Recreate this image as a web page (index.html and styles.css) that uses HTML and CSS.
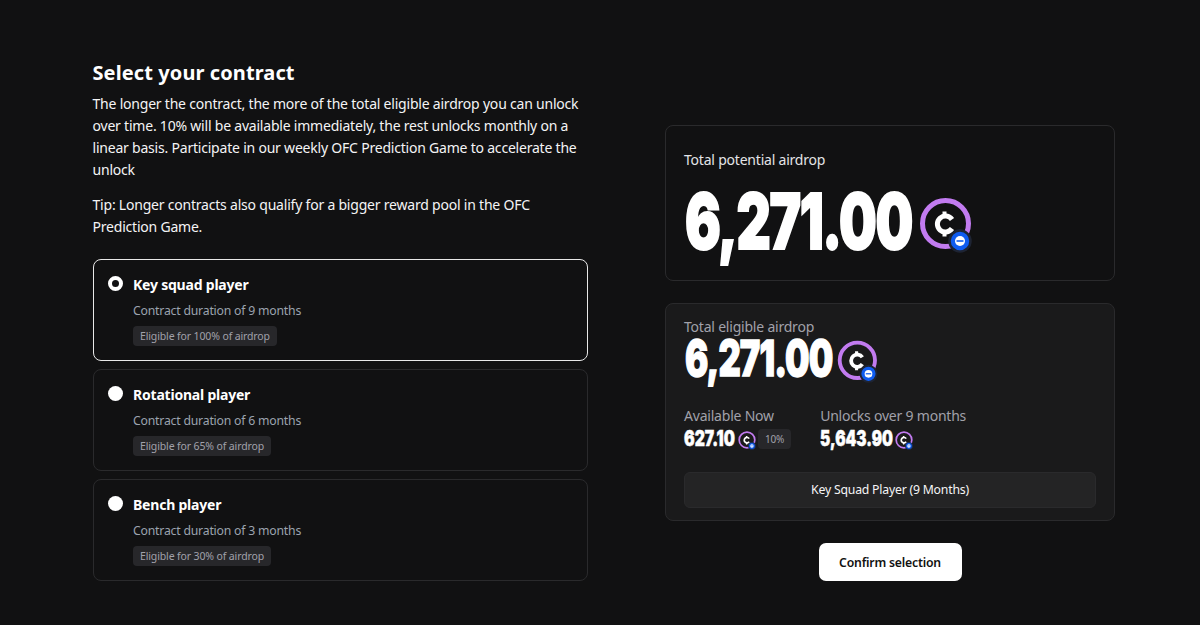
FILE: index.html
```html
<!DOCTYPE html>
<html lang="en">
<head>
    <meta charset="UTF-8">
    <meta name="viewport" content="width=device-width, initial-scale=1.0">
    <title>Select your contract</title>
    <link rel="stylesheet" href="styles.css">
</head>
<body>
    <svg class="defs" width="0" height="0">
        <symbol id="coin" viewBox="0 0 56 56">
            <circle cx="26.5" cy="26.5" r="23" fill="none" stroke="#c27bf0" stroke-width="5"/>
            <path d="M33 22.5A8 8 0 1 0 33 31.5" fill="none" stroke="#fff" stroke-width="5"/>
            <path d="M25.5 14.5v5M25.5 34.5v5" stroke="#fff" stroke-width="4"/>
            <circle cx="41" cy="44" r="10.5" fill="#0f5cf0" stroke="#1e2433" stroke-width="2.5"/>
            <circle cx="41" cy="44" r="5" fill="#fff"/>
            <rect x="37.5" y="43.2" width="7" height="1.6" fill="#0f5cf0"/>
        </symbol>
    </svg>

    <main class="page">
        <!-- Contract options -->
        <section class="left">
            <h1>Select your contract</h1>
            <p class="intro">The longer the contract, the more of the total eligible airdrop you can unlock over time. 10% will be available immediately, the rest unlocks monthly on a linear basis. Participate in our weekly OFC Prediction Game to accelerate the unlock</p>
            <p class="tip">Tip: Longer contracts also qualify for a bigger reward pool in the OFC Prediction Game.</p>

            <div class="options">
                <div class="option selected">
                    <span class="radio"></span>
                    <div>
                        <h2>Key squad player</h2>
                        <p class="duration">Contract duration of 9 months</p>
                        <span class="badge">Eligible for 100% of airdrop</span>
                    </div>
                </div>
                <div class="option">
                    <span class="radio"></span>
                    <div>
                        <h2>Rotational player</h2>
                        <p class="duration">Contract duration of 6 months</p>
                        <span class="badge">Eligible for 65% of airdrop</span>
                    </div>
                </div>
                <div class="option">
                    <span class="radio"></span>
                    <div>
                        <h2>Bench player</h2>
                        <p class="duration">Contract duration of 3 months</p>
                        <span class="badge">Eligible for 30% of airdrop</span>
                    </div>
                </div>
            </div>
        </section>

        <!-- Airdrop summary -->
        <section class="right">
            <div class="card potential">
                <p class="potential-label">Total potential airdrop</p>
                <div class="amount amount-xl">
                    <span class="num num-xl">6,271.00</span>
                    <svg class="coin coin-xl"><use href="#coin"/></svg>
                </div>
            </div>

            <div class="card eligible">
                <p class="label">Total eligible airdrop</p>
                <div class="amount amount-lg">
                    <span class="num num-lg">6,271.00</span>
                    <svg class="coin coin-lg"><use href="#coin"/></svg>
                </div>
                <div class="split">
                    <div>
                        <p class="label">Available Now</p>
                        <div class="amount amount-sm">
                            <span class="num num-sm">627.10</span>
                            <svg class="coin coin-sm"><use href="#coin"/></svg>
                            <span class="pct">10%</span>
                        </div>
                    </div>
                    <div>
                        <p class="label">Unlocks over 9 months</p>
                        <div class="amount amount-sm">
                            <span class="num num-sm num-wide">5,643.90</span>
                            <svg class="coin coin-sm"><use href="#coin"/></svg>
                        </div>
                    </div>
                </div>
                <div class="chosen">Key Squad Player (9 Months)</div>
            </div>

            <div class="button-container">
                <button type="button" class="confirm">Confirm selection</button>
            </div>
        </section>
    </main>
</body>
</html>
```

FILE: styles.css
```css
* {
    box-sizing: border-box;
}

body {
    margin: 0;
    height: 625px;
    overflow: hidden;
    background-color: #111112;
    color: #fff;
    font-family: 'Noto Sans', sans-serif;
    letter-spacing: -0.21px;
}

p, h1, h2 {
    margin: 0;
}

.defs {
    display: block;
    height: 0;
}

.page {
    display: flex;
    align-items: flex-end;
    justify-content: space-between;
    padding: 60px 85px 44px 92.5px;
}

.left {
    width: 495px;
}

h1 {
    font-size: 20px;
    line-height: 26px;
    font-weight: 700;
    letter-spacing: 0.1px;
}

.intro, .tip {
    font-size: 14px;
    line-height: 22px;
    color: #f4f4f5;
}

.intro {
    margin-top: 7px;
}

.tip {
    margin-top: 13px;
}

.options {
    display: flex;
    flex-direction: column;
    gap: 8px;
    margin-top: 21px;
}

.option {
    display: flex;
    gap: 10px;
    height: 102px;
    padding: 14px 14px 0 14.5px;
    border: 1px solid #2a2a2c;
    border-radius: 8px;
}

.option.selected {
    border-color: #e8e8e8;
}

.radio {
    flex: none;
    width: 15px;
    height: 15px;
    margin-top: 2px;
    border-radius: 50%;
    background-color: #fff;
}

.selected .radio {
    border: 4px solid #fff;
    background-color: #111112;
}

h2 {
    font-size: 14px;
    line-height: 22px;
    font-weight: 700;
}

.duration {
    margin-top: 5px;
    font-size: 12.25px;
    line-height: 20px;
    color: #9ca3af;
}

.badge {
    display: inline-block;
    margin-top: 5px;
    padding: 0 7px;
    height: 20px;
    line-height: 21px;
    font-size: 10.5px;
    letter-spacing: -0.13px;
    color: #a1a1aa;
    background-color: #27272a;
    border-radius: 4px;
}

.right {
    width: 450px;
    display: flex;
    flex-direction: column;
}

.card {
    border: 1px solid #2a2a2c;
    border-radius: 8px;
}

.potential {
    height: 156px;
    padding: 24px 18px 0;
}

.potential-label {
    font-size: 14px;
    line-height: 20px;
    color: #e4e4e7;
}

.eligible {
    height: 218px;
    margin-top: 22px;
    padding: 14px 18px 0;
    background-color: #1a1a1b;
}

.label {
    font-size: 14px;
    line-height: 18px;
    color: #a1a1aa;
}

.amount {
    display: flex;
    align-items: center;
}

.amount-xl {
    margin-top: 13px;
}

.amount-lg {
    height: 45px;
}

.amount-sm {
    margin-top: 3px;
}

/* digits are squeezed sideways, the box width holds the visible width */
.num {
    display: inline-block;
    flex: none;
    white-space: nowrap;
    font-family: 'Inter', sans-serif;
    font-weight: 900;
    color: #fff;
    transform-origin: left center;
}

.num-xl {
    width: 229px;
    font-size: 77px;
    line-height: 76px;
    letter-spacing: -2px;
    -webkit-text-stroke: 2px #fff;
    transform: translateX(1px) scaleX(0.69);
}

.num-lg {
    width: 148px;
    font-size: 50px;
    line-height: 45px;
    letter-spacing: -1.3px;
    -webkit-text-stroke: 1.3px #fff;
    transform: translateX(1px) scaleX(0.69);
}

.num-sm {
    width: 51px;
    font-size: 21px;
    line-height: 22px;
    letter-spacing: 0;
    -webkit-text-stroke: 0.5px #fff;
    transform: scaleX(0.75);
}

.num-wide {
    width: 72px;
    transform: scaleX(0.73);
}

.coin {
    flex: none;
}

.coin-xl {
    width: 56px;
    height: 56px;
    margin: 8px 0 0 6px;
}

.coin-lg {
    width: 43px;
    height: 43px;
    margin: 6px 0 0 5px;
}

.coin-sm {
    width: 19px;
    height: 19px;
    margin: 2px 0 0 3px;
}

.split {
    display: flex;
    gap: 29px;
    margin-top: 26px;
}

.pct {
    margin-left: 1px;
    padding: 0 7px;
    height: 20px;
    line-height: 20px;
    font-size: 10px;
    color: #a1a1aa;
    background-color: #27272a;
    border-radius: 4px;
}

.chosen {
    margin-top: 22px;
    height: 36px;
    line-height: 34px;
    text-align: center;
    font-size: 12.25px;
    color: #f4f4f5;
    background-color: #242425;
    border: 1px solid #2a2a2c;
    border-radius: 6px;
}

.button-container {
    display: flex;
    justify-content: center;
    margin-top: 22px;
}

.confirm {
    width: 143px;
    height: 38px;
    border: none;
    border-radius: 7px;
    background-color: #fff;
    color: #111;
    font-family: inherit;
    font-size: 12.25px;
    font-weight: 600;
    letter-spacing: -0.2px;
}
```
